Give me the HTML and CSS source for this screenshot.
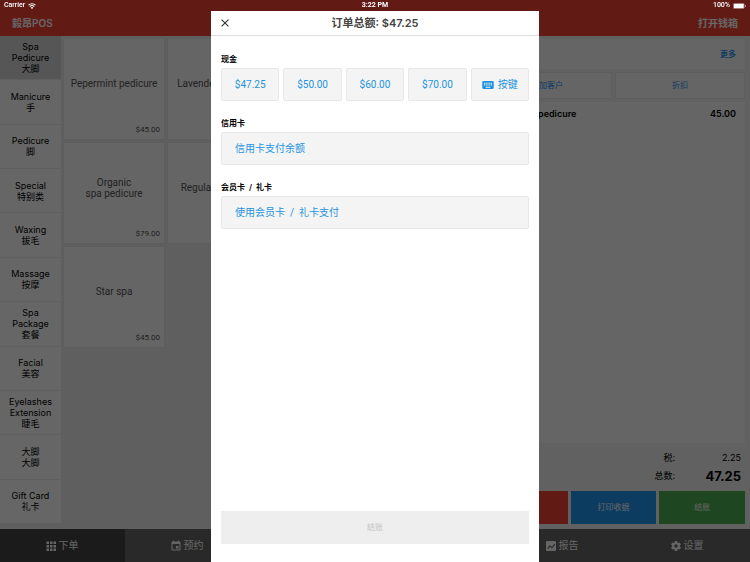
FILE: index.html
```html
<!DOCTYPE html>
<html lang="zh-CN">
<head>
    <meta charset="UTF-8">
    <meta name="viewport" content="width=device-width, initial-scale=1.0">
    <title>毅昂POS</title>
    <link rel="stylesheet" href="styles.css">
</head>
<body>
    <!-- Top bar -->
    <header class="top-bar">
        <div class="status-bar">
            <span class="status-left">
                Carrier
                <svg class="wifi" viewBox="0 0 16 12" aria-hidden="true">
                    <path d="M1 4.4a10 10 0 0 1 14 0M3.6 7.2a6.3 6.3 0 0 1 8.8 0" fill="none" stroke="#fff" stroke-width="2.2"/>
                    <path d="M8 12 5.4 9.3a3.7 3.7 0 0 1 5.2 0z" fill="#fff"/>
                </svg>
            </span>
            <span class="status-time">3:22 PM</span>
            <span class="status-right">
                100%
                <svg class="battery" viewBox="0 0 26 12" aria-hidden="true">
                    <rect x="0.5" y="0.5" width="22" height="11" rx="2.5" fill="none" stroke="#fff" stroke-opacity="0.6"/>
                    <rect x="1.5" y="1.5" width="20" height="9" rx="1.5" fill="#fff"/>
                    <path d="M24 4v4c1-.4 1.500-1.200 1.500-2S25 4.400 24 4z" fill="#fff"/>
                </svg>
            </span>
        </div>
        <div class="title-bar">
            <h1>毅昂POS</h1>
            <button class="drawer-button">打开钱箱</button>
        </div>
    </header>

    <div class="main-content">
        <!-- Categories -->
        <nav class="categories">
            <button class="category active">Spa<br>Pedicure<br>大脚</button>
            <button class="category">Manicure<br>手</button>
            <button class="category">Pedicure<br>脚</button>
            <button class="category">Special<br>特别类</button>
            <button class="category">Waxing<br>拔毛</button>
            <button class="category">Massage<br>按摩</button>
            <button class="category">Spa<br>Package<br>套餐</button>
            <button class="category">Facial<br>美容</button>
            <button class="category">Eyelashes<br>Extension<br>睫毛</button>
            <button class="category">大脚<br>大脚</button>
            <button class="category">Gift Card<br>礼卡</button>
        </nav>

        <!-- Products -->
        <main class="products">
            <div class="product-row">
                <button class="product"><span class="product-name">Pepermint pedicure</span><span class="product-price">$45.00</span></button>
                <button class="product"><span class="product-name">Lavender pedicure</span></button>
            </div>
            <div class="product-row">
                <button class="product"><span class="product-name">Organic<br>spa pedicure</span><span class="product-price">$79.00</span></button>
                <button class="product"><span class="product-name">Regular pedicure</span></button>
            </div>
            <div class="product-row">
                <button class="product"><span class="product-name">Star spa</span><span class="product-price">$45.00</span></button>
            </div>
        </main>

        <!-- Order -->
        <aside class="order">
            <div class="order-head">
                <a href="#" class="more-link">更多</a>
            </div>
            <div class="order-tools">
                <button class="tool-button">添加客户</button>
                <button class="tool-button">折扣</button>
            </div>
            <div class="order-items">
                <div class="order-item">
                    <span>Pepermint pedicure</span>
                    <span>45.00</span>
                </div>
            </div>
            <dl class="totals">
                <dt>税:</dt>
                <dd>2.25</dd>
                <dt>总数:</dt>
                <dd class="grand-total">47.25</dd>
            </dl>
            <div class="order-actions">
                <button class="action red" aria-label="取消"></button>
                <button class="action blue">打印收据</button>
                <button class="action green">结账</button>
            </div>
        </aside>
    </div>

    <!-- Tab bar -->
    <nav class="tab-bar">
        <button class="tab active">
            <svg viewBox="0 0 24 24" aria-hidden="true"><path d="M3 3h5v5H3zM10 3h5v5h-5zM17 3h5v5h-5zM3 10h5v5H3zM10 10h5v5h-5zM17 10h5v5h-5zM3 17h5v5H3zM10 17h5v5h-5zM17 17h5v5h-5z"/></svg>
            下单
        </button>
        <button class="tab">
            <svg viewBox="0 0 24 24" aria-hidden="true"><path d="M17 12h-5v5h5v-5zM16 1v2H8V1H6v2H5c-1.110 0-1.990.9-1.990 2L3 19a2 2 0 0 0 2 2h14c1.100 0 2-.9 2-2V5c0-1.100-.9-2-2-2h-1V1h-2zm3 18H5V8h14v11z"/></svg>
            预约
        </button>
        <button class="tab tab-report">
            <svg viewBox="0 0 24 24" aria-hidden="true"><path fill-rule="evenodd" d="M4 2h16a2 2 0 0 1 2 2v16a2 2 0 0 1-2 2H4a2 2 0 0 1-2-2V4c0-1.100.9-2 2-2zm.5 14.500L6 18l4-4.500 4 3.500 6.500-8L19 7.500l-5.200 6.300-4-3.600z"/></svg>
            报告
        </button>
        <button class="tab">
            <svg viewBox="0 0 24 24" aria-hidden="true"><path d="M19.430 12.980c.04-.32.07-.64.07-.98s-.03-.66-.07-.98l2.110-1.650c.19-.15.24-.42.120-.64l-2-3.460c-.12-.22-.39-.3-.61-.22l-2.490 1c-.52-.4-1.080-.73-1.690-.98l-.38-2.650C14.460 2.180 14.250 2 14 2h-4c-.25 0-.46.18-.49.42l-.38 2.650c-.61.25-1.170.59-1.690.98l-2.490-1c-.23-.09-.49 0-.61.22l-2 3.460c-.13.22-.07.49.12.64l2.110 1.650c-.04.32-.07.65-.07.98s.03.66.07.98l-2.110 1.650c-.19.15-.24.42-.12.64l2 3.460c.12.22.39.3.61.22l2.490-1c.52.4 1.080.73 1.690.98l.38 2.650c.03.24.24.42.49.42h4c.25 0 .46-.18.49-.42l.38-2.650c.61-.25 1.170-.59 1.690-.98l2.490 1c.23.09.49 0 .61-.22l2-3.460c.12-.22.07-.49-.12-.64l-2.110-1.650zM12 15.500a3.500 3.500 0 1 1 0-7 3.500 3.500 0 0 1 0 7z"/></svg>
            设置
        </button>
    </nav>

    <!-- Payment dialog -->
    <div class="overlay">
        <div class="dialog" role="dialog" aria-modal="true" aria-labelledby="dialog-title">
            <div class="dialog-header">
                <button class="close-button" aria-label="关闭">
                    <svg viewBox="0 0 10 10" aria-hidden="true"><path d="M.7.7l8.600 8.600M9.300.7L.7 9.300" stroke="#333" stroke-width="1.400"/></svg>
                </button>
                <h2 id="dialog-title">订单总额: $47.25</h2>
            </div>
            <div class="dialog-body">
                <section class="payment">
                    <h3>现金</h3>
                    <div class="cash-options">
                        <button class="pay-button">$47.25</button>
                        <button class="pay-button">$50.00</button>
                        <button class="pay-button">$60.00</button>
                        <button class="pay-button">$70.00</button>
                        <button class="pay-button">
                            <svg viewBox="2 5 20 14" aria-hidden="true"><path d="M20 5H4c-1.100 0-1.990.9-1.990 2L2 17c0 1.100.9 2 2 2h16c1.100 0 2-.9 2-2V7c0-1.100-.9-2-2-2zm-9 3h2v2h-2V8zm0 3h2v2h-2v-2zM8 8h2v2H8V8zm0 3h2v2H8v-2zm-1 2H5v-2h2v2zm0-3H5V8h2v2zm9 7H8v-2h8v2zm0-4h-2v-2h2v2zm0-3h-2V8h2v2zm3 3h-2v-2h2v2zm0-3h-2V8h2v2z"/></svg>
                            按键
                        </button>
                    </div>
                </section>
                <section class="payment">
                    <h3>信用卡</h3>
                    <button class="pay-button wide">信用卡支付余额</button>
                </section>
                <section class="payment">
                    <h3>会员卡&nbsp; / &nbsp;礼卡</h3>
                    <button class="pay-button wide">使用会员卡&nbsp; / &nbsp;礼卡支付</button>
                </section>
                <button class="checkout-button" disabled>结账</button>
            </div>
        </div>
    </div>
</body>
</html>
```

FILE: styles.css
```css
/* Global Styles */
* {
    box-sizing: border-box;
}

body {
    margin: 0;
    height: 100vh;
    display: flex;
    flex-direction: column;
    overflow: hidden;
    background-color: #eee;
    color: #000;
    font-family: Inter, "Noto Sans CJK SC", sans-serif;
    font-size: 9px;
    line-height: 11px;
}

h1, h2, h3, dl, dd {
    margin: 0;
}

button {
    border: none;
    padding: 0;
    background: none;
    color: inherit;
    font: inherit;
    cursor: pointer;
}

/* Top Bar */
.top-bar {
    background-color: #f44336;
    color: #fff;
}

/* the status text stays above the overlay */
.status-bar {
    position: relative;
    z-index: 3;
    display: grid;
    grid-template-columns: 1fr auto 1fr;
    align-items: center;
    height: 11px;
    padding: 0 4px;
    font-family: Roboto, sans-serif;
    font-size: 7px;
    font-weight: 500;
}

.status-left, .status-right {
    display: flex;
    align-items: center;
    gap: 3px;
}

.status-right {
    justify-content: flex-end;
}

.status-time {
    font-weight: 700;
}

.wifi {
    width: 8px;
    height: 6px;
}

.battery {
    width: 13px;
    height: 6px;
}

.title-bar {
    display: flex;
    justify-content: space-between;
    align-items: center;
    height: 25px;
    padding: 0 12px;
}

.title-bar h1, .drawer-button {
    font-size: 10px;
    font-weight: 600;
}

/* Main Content Area */
.main-content {
    flex: 1;
    min-height: 0;
    display: flex;
}

/* Categories */
.categories {
    width: 61px;
    margin-bottom: 5px;
    display: flex;
    flex-direction: column;
    background-color: #fff;
}

.category {
    flex: 1;
    border-bottom: 1px solid #eee;
}

.category.active {
    background-color: #d8d8d8;
}

/* Products */
.products {
    flex: 1;
    display: flex;
    flex-direction: column;
    gap: 4px;
    padding: 3px;
}

.product-row {
    display: grid;
    grid-template-columns: repeat(4, 1fr);
    gap: 4px;
}

.product {
    display: grid;
    grid-template-rows: 1fr 11px;
    height: 100px;
    padding: 4px;
    background-color: #fcfcfc;
    box-shadow: 0 0 2px rgba(0, 0, 0, 0.08);
    color: #555;
    font-family: Roboto, "Noto Sans CJK SC", sans-serif;
}

.product-name {
    align-self: center;
    font-size: 10px;
}

.product-price {
    text-align: right;
    font-size: 8px;
}

/* Order */
.order {
    width: 271px;
    display: flex;
    flex-direction: column;
    padding: 3px 5px 5px 3px;
    background-color: #f2f2f2;
}

.order-head {
    display: flex;
    justify-content: flex-end;
    align-items: center;
    height: 30px;
    padding: 0 9px;
    background-color: #fcfcfc;
}

.more-link {
    color: #2196f3;
    font-size: 8px;
    font-weight: 600;
    text-decoration: none;
}

.order-tools {
    display: grid;
    grid-template-columns: 1fr 1fr;
    gap: 3px;
    margin: 3px 0;
}

.tool-button {
    height: 27px;
    border: 1px solid #e8e8e8;
    background-color: #fcfcfc;
    color: #2196f3;
    font-size: 8px;
}

.order-items {
    flex: 1;
    background-color: #fcfcfc;
}

.order-item {
    display: flex;
    justify-content: space-between;
    padding: 6px 9px;
    font-weight: 600;
}

.totals {
    display: grid;
    grid-template-columns: 1fr 66px;
    align-items: center;
    padding: 6px 4px;
    line-height: 18px;
    text-align: right;
}

.grand-total {
    font-size: 13px;
    font-weight: 700;
}

.order-actions {
    display: grid;
    grid-template-columns: repeat(3, 1fr);
    gap: 3px;
}

.action {
    height: 33px;
    color: #fff;
    font-size: 8px;
}

.red {
    background-color: #f44336;
}

.blue {
    background-color: #2196f3;
}

.green {
    background-color: #4caf50;
}

/* Tab Bar */
.tab-bar {
    display: grid;
    grid-template-columns: repeat(6, 1fr);
    height: 33px;
    background-color: #666;
}

.tab {
    display: flex;
    justify-content: center;
    align-items: center;
    gap: 2px;
    padding-right: 2px;
    color: #fff;
    font-size: 10px;
}

.tab.active {
    background-color: #444;
}

.tab-report {
    grid-column: 5;
}

.tab svg {
    width: 12px;
    height: 12px;
    fill: currentColor;
}

/* Payment Dialog */
.overlay {
    position: fixed;
    inset: 0;
    z-index: 2;
    display: flex;
    justify-content: center;
    padding-top: 11px;
    background-color: rgba(0, 0, 0, 0.6);
}

.dialog {
    width: 328px;
    max-width: 100%;
    display: flex;
    flex-direction: column;
    background-color: #fff;
}

.dialog-header {
    display: grid;
    grid-template-columns: 8px 1fr 8px;
    align-items: center;
    height: 25px;
    padding: 0 10px;
    border-bottom: 1px solid #ddd;
}

.dialog-header h2 {
    color: #444;
    font-size: 11px;
    font-weight: 600;
    text-align: center;
}

.close-button svg {
    display: block;
    width: 8px;
    height: 8px;
}

.dialog-body {
    flex: 1;
    display: flex;
    flex-direction: column;
    gap: 17px;
    padding: 18px 10px;
}

.payment h3 {
    margin-bottom: 4px;
    font-size: 8px;
    font-weight: 600;
    line-height: 10px;
}

.cash-options {
    display: grid;
    grid-template-columns: repeat(5, 1fr);
    gap: 4px;
}

.pay-button {
    display: flex;
    justify-content: center;
    align-items: center;
    gap: 4px;
    height: 33px;
    border: 1px solid #e8e8e8;
    border-radius: 2px;
    background-color: #f4f4f4;
    color: #1d93e0;
    font-family: Roboto, "Noto Sans CJK SC", sans-serif;
    font-size: 10px;
}

.pay-button.wide {
    width: 100%;
    justify-content: flex-start;
    padding: 0 13px;
}

.pay-button svg {
    width: 12px;
    height: 8px;
    fill: currentColor;
}

.checkout-button {
    height: 33px;
    margin-top: auto;
    background-color: #eee;
    color: #c4c4c4;
    font-size: 8px;
    cursor: default;
}
```
